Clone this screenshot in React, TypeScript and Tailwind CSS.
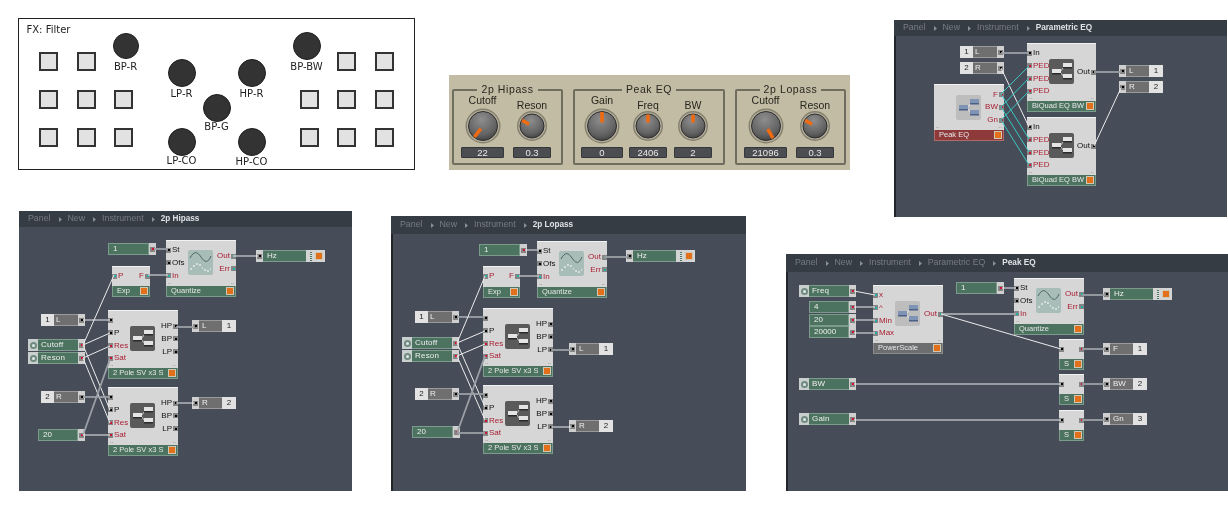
import React from 'react'

type Pin = { label?: string; dot?: 'k' | 'r' | 't'; red?: boolean }
type Wire = [number, number, number, number, 'w' | 'g' | 'c']

const sans = "font-['Liberation_Sans',Arial,sans-serif]"

const Port: React.FC<{ dot?: 'k' | 'r' | 't' }> = ({ dot = 'k' }) => (
  <span className="flex h-[5px] w-[5px] shrink-0 items-center justify-center bg-[#858585]">
    <span
      className={`h-[2px] w-[2px] ${dot === 'r' ? 'bg-[#d01030]' : dot === 't' ? 'bg-[#20b0a8]' : 'bg-black'}`}
    />
  </span>
)

const Led: React.FC = () => <span className="block h-[8px] w-[8px] border border-[#cfc8b4] bg-[#e2701a]" />

const BoxIcon: React.FC<{ light?: boolean }> = ({ light }) => {
  const block = light ? '#7f93b5' : '#e4e4e4'
  const edge = light ? '#4c5f85' : '#2a2a2a'
  return (
    <svg width="25" height="25" viewBox="0 0 25 25" className="block">
      <rect width="25" height="25" rx="2" fill={light ? '#bdbdbd' : '#5a5a5a'} />
      <path d="M11 13 L15 8 M11 13 L15 18" stroke={light ? '#e8e8e8' : '#cfcfcf'} strokeWidth="1" fill="none" />
      <rect x="3" y="10" width="9" height="5" fill={block} />
      <rect x="3" y="14" width="9" height="1.5" fill={edge} />
      <rect x="14" y="4" width="9" height="5" fill={block} />
      <rect x="14" y="8" width="9" height="1.5" fill={edge} />
      <rect x="14" y="15" width="9" height="5" fill={block} />
      <rect x="14" y="19" width="9" height="1.5" fill={edge} />
    </svg>
  )
}

const WaveIcon: React.FC = () => (
  <svg width="25" height="25" viewBox="0 0 25 25" className="block">
    <rect width="25" height="25" rx="2" fill="#a9bdb8" />
    <path d="M2 8 C6 1 9 1 13 7 S20 13 23 6" stroke="#3f5f5a" strokeWidth="0.9" fill="none" />
    <path
      d="M2 19 H4 M5 16 H7 M8 14 H10 M11 15 H13 M14 18 H15 M16 20 H18 M19 21 H21 M22 19 H23"
      stroke="#fff"
      strokeWidth="1"
      fill="none"
    />
  </svg>
)

const Module: React.FC<{
  x: number
  y: number
  w: number
  h: number
  title: string
  foot?: number
  tone?: 'green' | 'red' | 'grey'
  inputs?: Pin[]
  outputs?: Pin[]
  inTop?: number
  outTop?: number
  icon?: 'dark' | 'light' | 'wave'
  iconY?: number
}> = ({ x, y, w, h, title, foot = 11.5, tone = 'green', inputs = [], outputs = [], inTop = 6.5, outTop = 12.5, icon, iconY = 15 }) => (
  <div
    className={`absolute flex flex-col border-t border-t-[#f2f2f2] bg-[#d6d6d6] text-[8px] leading-none ${sans}`}
    style={{ left: x, top: y, width: w, height: h }}
  >
    <div className="relative flex min-h-0 flex-1">
      <div className="flex w-[22px] shrink-0 flex-col gap-[7.8px]" style={{ paddingTop: inTop }}>
        {inputs.map((p, i) => (
          <div key={i} className="flex h-[5px] items-center gap-[1px]">
            <Port dot={p.dot} />
            <span className={`whitespace-nowrap ${p.red ? 'text-[#a81c30]' : 'text-[#111]'}`}>{p.label}</span>
          </div>
        ))}
      </div>
      {icon && (
        <div className="shrink-0" style={{ paddingTop: iconY }}>
          {icon === 'wave' ? <WaveIcon /> : <BoxIcon light={icon === 'light'} />}
        </div>
      )}
      <div className="flex min-w-0 flex-1 flex-col items-end gap-[7.8px]" style={{ paddingTop: outTop }}>
        {outputs.map((p, i) => (
          <div key={i} className="flex h-[5px] items-center gap-[1px]">
            <span className={`whitespace-nowrap ${p.red ? 'text-[#a81c30]' : 'text-[#111]'}`}>{p.label}</span>
            <Port dot={p.dot} />
          </div>
        ))}
      </div>
      {icon && (
        <div className="absolute right-[2px] bottom-[1px] left-[2px] flex justify-between text-[6px] text-[#555]">
          <span>..</span>
          <span>..</span>
        </div>
      )}
    </div>
    <div
      className={`flex shrink-0 items-center justify-between border-x border-b pr-[1px] pl-[4px] text-[7.5px] text-[#e6e6e6] ${
        tone === 'red'
          ? 'border-[#b06a68] bg-[#8e3a3a]'
          : tone === 'grey'
            ? 'border-[#8c8c8c] bg-[#6d6e6f]'
            : 'border-[#7d9b8c] bg-[#4c7360]'
      }`}
      style={{ height: foot }}
    >
      <span className="truncate">{title}</span>
      <Led />
    </div>
  </div>
)

const Bar: React.FC<{ x: number; y: number; w: number; children: React.ReactNode }> = ({ x, y, w, children }) => (
  <div
    className={`absolute flex h-[12px] items-stretch text-[8px] leading-[12px] text-[#eee] ${sans}`}
    style={{ left: x, top: y, width: w }}
  >
    {children}
  </div>
)

const Tab: React.FC<{ dot?: 'k' | 'r' | 't' }> = ({ dot }) => (
  <div className="flex w-[7px] shrink-0 items-center justify-center bg-[#cfcfcf]">
    <Port dot={dot} />
  </div>
)

const InBar: React.FC<{ x: number; y: number; n: string; label: string }> = ({ x, y, n, label }) => (
  <Bar x={x} y={y} w={44}>
    <div className="w-[13px] shrink-0 bg-[#e2e2e2] text-center text-[#222]">{n}</div>
    <div className="flex-1 border-y border-[#9a9a9a] bg-[#6f6f6f] pl-[2px] leading-[10px]">{label}</div>
    <Tab />
  </Bar>
)

const OutBar: React.FC<{ x: number; y: number; n: string; label: string }> = ({ x, y, n, label }) => (
  <Bar x={x} y={y} w={44}>
    <Tab />
    <div className="flex-1 border-y border-[#9a9a9a] bg-[#6f6f6f] pl-[3px] leading-[10px]">{label}</div>
    <div className="w-[14px] shrink-0 bg-[#e2e2e2] text-center text-[#222]">{n}</div>
  </Bar>
)

const Const: React.FC<{ x: number; y: number; w: number; label: string }> = ({ x, y, w, label }) => (
  <Bar x={x} y={y} w={w}>
    <div className="flex-1 border border-[#7d9b8c] bg-[#4c7360] pl-[4px] leading-[10px]">{label}</div>
    <Tab dot="r" />
  </Bar>
)

const KnobIn: React.FC<{ x: number; y: number; label: string }> = ({ x, y, label }) => (
  <Bar x={x} y={y} w={57}>
    <div className="flex w-[10px] shrink-0 items-center justify-center bg-[#c9cfcc]">
      <span className="flex h-[7px] w-[7px] items-center justify-center rounded-full bg-[#6f8a80]">
        <span className="h-[3px] w-[3px] rounded-full bg-[#dfe8e4]" />
      </span>
    </div>
    <div className="flex-1 border-y border-[#7d9b8c] bg-[#4c7360] pl-[3px] leading-[10px] tracking-[0.2px]">{label}</div>
    <Tab dot="r" />
  </Bar>
)

const Hz: React.FC<{ x: number; y: number }> = ({ x, y }) => (
  <Bar x={x} y={y} w={69}>
    <Tab />
    <div className="flex-1 border-y border-[#7d9b8c] bg-[#4c7360] pl-[4px] leading-[10px]">Hz</div>
    <div className="flex w-[19px] shrink-0 items-center justify-between bg-[#d4d4d4] pr-[2px] pl-[4px]">
      <span className="h-[9px] w-[2px] bg-[linear-gradient(#4c7360_50%,#e0e0e0_50%)] bg-[length:2px_2px]" />
      <Led />
    </div>
  </Bar>
)

const Wires: React.FC<{ items: Wire[] }> = ({ items }) => (
  <svg width="1228" height="510" className="absolute top-0 left-0">
    {items.map(([a, b, c, d, k], i) => (
      <line
        key={i}
        x1={a}
        y1={b}
        x2={c}
        y2={d}
        stroke={k === 'c' ? '#38c8c4' : k === 'g' ? '#9aa0a5' : '#ececec'}
        strokeWidth={k === 'g' ? 1.8 : 1}
      />
    ))}
  </svg>
)

const Crumbs: React.FC<{ items: string[] }> = ({ items }) => (
  <div className={`flex h-full items-center pl-[9px] text-[8.8px] text-[#767c86] ${sans}`}>
    {items.map((t, i) => (
      <React.Fragment key={t}>
        {i > 0 && (
          <svg width="3" height="5" viewBox="0 0 3 5" className="mr-[6px] ml-[8px]">
            <path d="M0 0 L3 2.5 L0 5 Z" fill="#8a9099" />
          </svg>
        )}
        {i === items.length - 1 ? <span className="text-[8.2px] font-bold text-[#dfe2e6]">{t}</span> : <span>{t}</span>}
      </React.Fragment>
    ))}
  </div>
)

const Panel: React.FC<{
  ox: number
  oy: number
  crumbs: string[]
  bar?: string
  className: string
  children: React.ReactNode
}> = ({ ox, oy, crumbs, bar = 'h-[17px]', className, children }) => (
  <div className={`relative shrink-0 overflow-hidden bg-[#464c58] blur-[0.4px] ${className}`}>
    <div className={`${bar} bg-[#363c44]`}>
      <Crumbs items={crumbs} />
    </div>
    {/* children use page coordinates */}
    <div className="absolute" style={{ left: -ox, top: -oy }}>
      {children}
    </div>
  </div>
)

const Square: React.FC = () => <div className="h-[19px] w-[19px] border-2 border-[#333] bg-[#e2e2e2]" />

const dials: Array<{ x: number; y: number; r: number; label: string; ly: number }> = [
  { x: 126, y: 46, r: 13, label: 'BP-R', ly: 67 },
  { x: 182, y: 73, r: 14, label: 'LP-R', ly: 94 },
  { x: 252, y: 73, r: 14, label: 'HP-R', ly: 94 },
  { x: 217, y: 108, r: 14, label: 'BP-G', ly: 127 },
  { x: 182, y: 142, r: 14, label: 'LP-CO', ly: 161 },
  { x: 252, y: 142, r: 14, label: 'HP-CO', ly: 162 },
  { x: 307, y: 46, r: 14, label: 'BP-BW', ly: 67 },
]

const FxPanel: React.FC = () => (
  <div className="relative mt-[18px] ml-[18px] flex h-[152px] w-[397px] shrink-0 justify-between border-[1.5px] border-[#222] bg-white pt-[33px] pr-[20px] pl-[20px] font-['DejaVu_Sans',sans-serif] text-[10px] text-[#222] blur-[0.3px]">
    <div className="grid h-fit grid-cols-[19px_19px_19px] gap-x-[18.7px] gap-y-[19px]">
      <Square />
      <Square />
      <div />
      <Square />
      <Square />
      <Square />
      <Square />
      <Square />
      <Square />
    </div>
    <div className="grid h-fit grid-cols-[19px_19px_19px] gap-x-[18.7px] gap-y-[19px]">
      <div />
      <Square />
      <Square />
      <Square />
      <Square />
      <Square />
      <Square />
      <Square />
      <Square />
    </div>
    <div className="absolute" style={{ left: -19.5, top: -19.5 }}>
      <div className="absolute top-[24px] left-[27px] whitespace-nowrap leading-[12px]">FX: Filter</div>
      {dials.map((d) => (
        <React.Fragment key={d.label}>
          <div
            className="absolute rounded-full border border-[#1f1f1f] bg-[#333]"
            style={{ left: d.x - d.r, top: d.y - d.r, width: d.r * 2, height: d.r * 2 }}
          />
          <div
            className="absolute w-[60px] text-center leading-[12px] whitespace-nowrap"
            style={{ left: d.x - 30, top: d.ly - 6 }}
          >
            {d.label}
          </div>
        </React.Fragment>
      ))}
    </div>
  </div>
)

const Knob: React.FC<{ big?: boolean; angle: number }> = ({ big, angle }) => {
  const face = big ? 14.5 : 12
  const ring = big ? 17.5 : 15
  return (
    <svg width="36" height="36" viewBox="0 0 36 36">
      <defs>
        <radialGradient id="knobFace" cx="45%" cy="28%" r="80%">
          <stop offset="0%" stopColor="#8e8e8e" />
          <stop offset="65%" stopColor="#636363" />
          <stop offset="100%" stopColor="#3a3a3a" />
        </radialGradient>
      </defs>
      <circle cx="18" cy="18" r={ring - 0.7} fill="#b3ad9a" stroke="#85816f" strokeWidth="1.4" />
      <circle cx="18" cy="18" r={face} fill="url(#knobFace)" stroke="#2e2e2e" strokeWidth="1" />
      <rect
        x="16.25"
        y={18 - face + 0.5}
        width="3.5"
        height={face - 4}
        fill="#f06a10"
        transform={`rotate(${angle} 18 18)`}
      />
    </svg>
  )
}

const KnobCol: React.FC<{ label: string; value: string; big?: boolean; angle: number; w: string }> = ({
  label,
  value,
  big,
  angle,
  w,
}) => (
  <div className={`flex flex-col items-center ${w}`}>
    <div className={`h-[14px] leading-[12px] ${big ? '' : 'pt-[5px]'}`}>{label}</div>
    <Knob big={big} angle={angle} />
    <div className="mt-[3px] h-[11px] w-full rounded-[1px] border border-[#35383a] bg-[#4b4d50] text-center text-[9.5px] leading-[10px] text-[#e8e8e8]">
      {value}
    </div>
  </div>
)

const Group: React.FC<{ title: string; className: string; children: React.ReactNode }> = ({
  title,
  className,
  children,
}) => (
  <div className={`relative h-[76px] shrink-0 rounded-[2px] border-2 border-[#6e6d5e] pt-[3px] ${className}`}>
    <div className="absolute -top-[8px] right-0 left-0 text-center leading-[12px]">
      <span className="bg-[#c3bca4] px-[4px] text-[10.5px] tracking-[0.6px]">{title}</span>
    </div>
    <div className="flex">{children}</div>
  </div>
)

const KnobPanel: React.FC = () => (
  <div
    className={`mt-[75px] ml-[34px] flex h-[95px] w-[401px] shrink-0 gap-[10px] bg-[#c3bca4] pt-[14px] pl-[3px] text-[10.5px] text-[#26261f] blur-[0.45px] ${sans}`}
  >
    <Group title="2p Hipass" className="w-[111px] pl-[7px]">
      <KnobCol label="Cutoff" value="22" big angle={-142} w="w-[43px]" />
      <div className="w-[9px]" />
      <KnobCol label="Reson" value="0.3" angle={-60} w="w-[38px]" />
    </Group>
    <Group title="Peak EQ" className="w-[152px] pl-[6px]">
      <KnobCol label="Gain" value="0" big angle={0} w="w-[42px]" />
      <div className="w-[6px]" />
      <KnobCol label="Freq" value="2406" angle={0} w="w-[38px]" />
      <div className="w-[7px]" />
      <KnobCol label="BW" value="2" angle={0} w="w-[38px]" />
    </Group>
    <Group title="2p Lopass" className="w-[111px] pl-[7px]">
      <KnobCol label="Cutoff" value="21096" big angle={150} w="w-[43px]" />
      <div className="w-[9px]" />
      <KnobCol label="Reson" value="0.3" angle={-60} w="w-[38px]" />
    </Group>
  </div>
)

const red = (label: string, dot: 'r' | 't' = 'r'): Pin => ({ label, dot, red: true })
const blk = (label?: string): Pin => ({ label })

const biquad = {
  x: 1028,
  w: 69,
  h: 69,
  title: 'BiQuad EQ BW',
  icon: 'dark' as const,
  inputs: [blk('In'), red('PED'), red('PED'), red('PED')],
  outputs: [blk('Out')],
  outTop: 25.5,
}

const EqPanel: React.FC = () => (
  <Panel
    ox={895}
    oy={20}
    crumbs={['Panel', 'New', 'Instrument', 'Parametric EQ']}
    bar="h-[16px]"
    className="mt-[20px] ml-[44px] h-[197px] w-[333px] shadow-[inset_2px_0_0_#22262b]"
  >
    <Module y={43} {...biquad} />
    <Module y={117} {...biquad} />
    <Module
      x={935}
      y={84}
      w={70}
      h={57}
      title="Peak EQ"
      tone="red"
      icon="light"
      iconY={10}
      outputs={[red('F'), red('BW'), red('Gn')]}
      outTop={7}
    />
    <InBar x={961} y={46} n="1" label="L" />
    <InBar x={961} y={62} n="2" label="R" />
    <OutBar x={1120} y={65} n="1" label="L" />
    <OutBar x={1120} y={81} n="2" label="R" />
    <Wires
      items={[
        [1002, 53, 1030, 53, 'g'],
        [1002, 68, 1030, 127, 'w'],
        [1002, 94, 1030, 66, 'c'],
        [1002, 107, 1030, 78, 'c'],
        [1002, 120, 1030, 91, 'c'],
        [1002, 94, 1030, 139, 'c'],
        [1002, 107, 1030, 152, 'c'],
        [1002, 120, 1030, 165, 'c'],
        [1095, 72, 1122, 72, 'g'],
        [1095, 146, 1122, 88, 'w'],
      ]}
    />
  </Panel>
)

const sv = {
  w: 70,
  h: 69,
  title: '2 Pole SV x3 S',
  icon: 'dark' as const,
  inputs: [blk(), blk('P'), red('Res'), red('Sat')],
  outputs: [blk('HP'), blk('BP'), blk('LP')],
}

const quantize = {
  w: 70,
  h: 57,
  title: 'Quantize',
  icon: 'wave' as const,
  iconY: 9,
  inputs: [blk('St'), blk('Ofs'), red('In', 't')],
  outputs: [red('Out', 't'), red('Err', 't')],
}

const HipassPanel: React.FC = () => (
  <Panel
    ox={19}
    oy={211}
    crumbs={['Panel', 'New', 'Instrument', '2p Hipass']}
    bar="h-[16px]"
    className="ml-[19px] h-[280px] w-[333px]"
  >
    <Const x={108} y={243} w={48} label="1" />
    <Module x={166} y={240} {...quantize} />
    <Module x={112} y={266} w={38} h={31} title="Exp" inputs={[red('P', 't')]} outputs={[red('F', 't')]} outTop={6.5} />
    <Hz x={256} y={250} />
    <InBar x={41} y={314} n="1" label="L" />
    <Module x={108} y={310} {...sv} />
    <OutBar x={192} y={320} n="1" label="L" />
    <KnobIn x={28} y={339} label="Cutoff" />
    <KnobIn x={28} y={352} label="Reson" />
    <Module x={108} y={387} {...sv} />
    <InBar x={41} y={391} n="2" label="R" />
    <OutBar x={192} y={397} n="2" label="R" />
    <Const x={38} y={429} w={47} label="20" />
    <Wires
      items={[
        [154, 249, 168, 249, 'g'],
        [148, 275, 168, 275, 'w'],
        [233, 256, 258, 256, 'w'],
        [83, 320, 110, 320, 'w'],
        [83, 345, 114, 275, 'w'],
        [83, 345, 110, 333, 'w'],
        [83, 358, 110, 346, 'w'],
        [83, 345, 110, 410, 'w'],
        [83, 358, 110, 423, 'w'],
        [83, 397, 110, 397, 'g'],
        [83, 435, 110, 359, 'g'],
        [83, 435, 110, 435, 'w'],
        [176, 327, 194, 327, 'g'],
        [176, 403, 194, 403, 'w'],
      ]}
    />
  </Panel>
)

const LopassPanel: React.FC = () => (
  <Panel
    ox={391}
    oy={216}
    crumbs={['Panel', 'New', 'Instrument', '2p Lopass']}
    bar="h-[18px]"
    className="mt-[5px] ml-[39px] h-[275px] w-[355px] shadow-[inset_2px_0_0_#22262b]"
  >
    <Const x={479} y={244} w={48} label="1" />
    <Module x={537} y={241} {...quantize} />
    <Module x={483} y={266} w={37} h={32} title="Exp" inputs={[red('P', 't')]} outputs={[red('F', 't')]} outTop={6.5} />
    <Hz x={626} y={250} />
    <InBar x={415} y={311} n="1" label="L" />
    <Module x={483} y={308} {...sv} />
    <OutBar x={569} y={343} n="1" label="L" />
    <KnobIn x={402} y={337} label="Cutoff" />
    <KnobIn x={402} y={350} label="Reson" />
    <Module x={483} y={385} {...sv} />
    <InBar x={415} y={388} n="2" label="R" />
    <OutBar x={569} y={420} n="2" label="R" />
    <Const x={412} y={426} w={48} label="20" />
    <Wires
      items={[
        [525, 250, 539, 250, 'w'],
        [519, 276, 539, 276, 'w'],
        [604, 257, 628, 257, 'g'],
        [457, 317, 485, 317, 'g'],
        [457, 343, 485, 276, 'w'],
        [457, 343, 485, 331, 'w'],
        [457, 356, 485, 344, 'w'],
        [457, 343, 485, 407, 'w'],
        [457, 356, 485, 420, 'w'],
        [457, 394, 485, 394, 'g'],
        [457, 433, 485, 356, 'g'],
        [457, 433, 485, 433, 'g'],
        [551, 350, 571, 350, 'g'],
        [551, 427, 571, 427, 'w'],
      ]}
    />
  </Panel>
)

const S: React.FC<{ y: number }> = ({ y }) => (
  <Module x={1059} y={y} w={25} h={31} title="S" inputs={[blk()]} outputs={[{ dot: 'r' }]} outTop={6.5} />
)

const PeakPanel: React.FC = () => (
  <Panel
    ox={786}
    oy={254}
    crumbs={['Panel', 'New', 'Instrument', 'Parametric EQ', 'Peak EQ']}
    bar="h-[18px]"
    className="mt-[43px] ml-[40px] h-[237px] w-[442px] shadow-[inset_2px_0_0_#22262b]"
  >
    <KnobIn x={799} y={285} label="Freq" />
    <Const x={809} y={301} w={47} label="4" />
    <Const x={809} y={314} w={47} label="20" />
    <Const x={809} y={326} w={47} label="20000" />
    <Module
      x={873}
      y={285}
      w={70}
      h={69}
      title="PowerScale"
      tone="grey"
      icon="light"
      inputs={[red('x', 't'), red('^', 't'), red('Min', 't'), red('Max', 't')]}
      outputs={[red('Out', 't')]}
      outTop={25.5}
    />
    <Const x={956} y={282} w={48} label="1" />
    <Module x={1014} y={278} {...quantize} />
    <Hz x={1103} y={288} />
    <S y={339} />
    <S y={374} />
    <S y={410} />
    <OutBar x={1103} y={343} n="1" label="F" />
    <OutBar x={1103} y={378} n="2" label="BW" />
    <OutBar x={1103} y={413} n="3" label="Gn" />
    <KnobIn x={799} y={378} label="BW" />
    <KnobIn x={799} y={413} label="Gain" />
    <Wires
      items={[
        [854, 291, 875, 295, 'w'],
        [854, 307, 875, 307, 'w'],
        [854, 320, 875, 320, 'w'],
        [854, 333, 875, 333, 'w'],
        [941, 314, 1016, 314, 'g'],
        [941, 314, 1061, 349, 'w'],
        [1002, 288, 1016, 288, 'w'],
        [1082, 295, 1105, 295, 'g'],
        [1082, 349, 1105, 349, 'g'],
        [854, 384, 1061, 384, 'w'],
        [1082, 384, 1105, 384, 'g'],
        [854, 420, 1061, 420, 'w'],
        [1082, 420, 1105, 420, 'g'],
      ]}
    />
  </Panel>
)

const App: React.FC = () => (
  <div className="grid h-[510px] w-[1228px] grid-rows-[211px_280px] overflow-hidden bg-white">
    <div className="flex items-start">
      <FxPanel />
      <KnobPanel />
      <EqPanel />
    </div>
    <div className="flex items-start">
      <HipassPanel />
      <LopassPanel />
      <PeakPanel />
    </div>
  </div>
)

export default App
